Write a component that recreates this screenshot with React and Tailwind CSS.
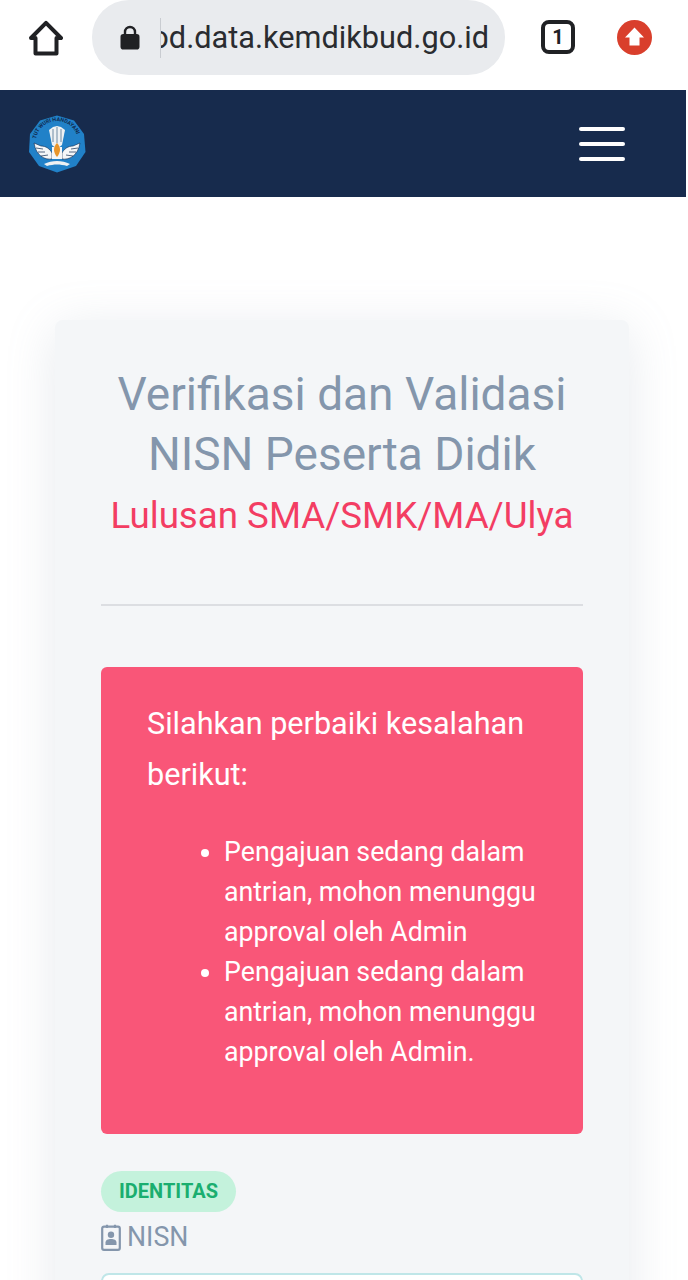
export default function App() {
  return (
    <div className="w-[688px] h-[1280px] overflow-hidden bg-white font-['Roboto',sans-serif]">
      {/* Browser bar */}
      <div className="h-[90px] flex items-start bg-white">
        <div className="w-[92px] h-[74px] flex items-center pl-[28px] pt-[1px]">
          <svg width="36" height="36" viewBox="0 0 36 36" fill="none" stroke="#202124" strokeWidth="4" strokeLinejoin="round" strokeLinecap="round">
            <path d="M3 18 L18 2.8 L33 18 H28.5 V33.5 H7.5 V18 Z" />
          </svg>
        </div>
        <div className="w-[413px] h-[75px] rounded-[37px] bg-[#e9ebee] flex items-center pl-[28px] pr-[16px]">
          <svg width="20" height="25" viewBox="0 0 20 25" className="shrink-0">
            <path d="M5 10 V7 a5 5 0 0 1 10 0 V10" fill="none" stroke="#202124" strokeWidth="2.4" />
            <rect x="0.5" y="9" width="19" height="15.5" rx="2.8" fill="#202124" />
          </svg>
          <div className="ml-[20px] w-[329px] overflow-hidden flex justify-end text-[30.7px] leading-[40px] text-[#2a2c30] whitespace-nowrap border-l border-[#c9ccd1]">
            pod.data.kemdikbud.go.id
          </div>
        </div>
        <div className="w-[183px] h-[74px] flex items-center pl-[36px]">
          <div className="w-[34px] h-[34px] border-[4px] border-[#202124] rounded-[8px] flex items-center justify-center text-[20px] font-bold text-[#202124] leading-none">
            1
          </div>
          <svg width="35" height="35" viewBox="0 0 35 35" className="ml-[42px]">
            <circle cx="17.5" cy="17.5" r="17.5" fill="#d93f2c" />
            <path d="M17.5 7.5 L27 17.5 H22.5 V25.5 H12.5 V17.5 H8 Z" fill="#fff" />
          </svg>
        </div>
      </div>

      {/* Navbar */}
      <div className="w-[686px] h-[107px] bg-[#172b4d] flex items-center justify-between pl-[28px] pr-[61px]">
        <svg width="58" height="58" viewBox="0 0 58 58">
          <path d="M29 0.5 L46 5.5 L56 19 L57.5 37 L48 51 L29 57.5 L11 51 L1 37 L2 19 L12 5.5 Z" fill="#2181c8" />
          <defs>
            <path id="logoArc" d="M7.5 28 C8 15 17 6.5 29 6 C41 6.5 50 15 50.5 28" />
          </defs>
          <text fontSize="5.4" fontWeight="700" fill="#10294d" fontFamily="Roboto, sans-serif">
            <textPath href="#logoArc" startOffset="4" textLength="55" lengthAdjust="spacingAndGlyphs">TUT WURI HANDAYANI</textPath>
          </text>
          <path d="M6 28 L13 31 C18 31 22 34 24 38 L24 44 C17 45 8 41 6 28 Z" fill="#f4f6f8" stroke="#10294d" strokeWidth="0.6" />
          <path d="M52 28 L45 31 C40 31 36 34 34 38 L34 44 C41 45 50 41 52 28 Z" fill="#f4f6f8" stroke="#10294d" strokeWidth="0.6" />
          <path d="M8 33 L15 34 M10 37 L17 37 M13 41 L20 40 M50 33 L43 34 M48 37 L41 37 M45 41 L38 40" stroke="#10294d" strokeWidth="0.7" />
          <path d="M21 15 L25 12 L29 11 L33 12 L37 15 L34 30 L29 34 L24 30 Z" fill="#eef1f3" />
          <path d="M25 14 V27 M29 12 V28 M33 14 V27" stroke="#6f8aa3" strokeWidth="1" />
          <path d="M24 32 H34 V44 H24 Z" fill="#f4f6f8" />
          <path d="M29 28 C33 32 33 37 29 42 C25 37 25 32 29 28 Z" fill="#e8952b" />
          <path d="M16 49 C24 45 34 45 42 49 L39 51 C32 49 26 49 19 51 Z" fill="#eef1f3" />
        </svg>
        <div className="flex flex-col gap-[11px]">
          <div className="w-[46px] h-[4px] rounded-full bg-white" />
          <div className="w-[46px] h-[4px] rounded-full bg-white" />
          <div className="w-[46px] h-[4px] rounded-full bg-white" />
        </div>
      </div>

      {/* Card */}
      <div className="ml-[55px] mt-[123px] w-[574px] h-[1100px] bg-[#f4f6f8] rounded-[8px] shadow-[0_8px_50px_rgba(136,152,170,0.2)] px-[46px] pt-[44px]">
        <h1 className="text-center text-[46px] leading-[60px] font-normal text-[#8496ac] whitespace-nowrap">
          Verifikasi dan Validasi
          <br />
          NISN Peserta Didik
        </h1>
        <p className="text-center text-[36.7px] leading-[46px] text-[#f33d63] mt-[9px] whitespace-nowrap">
          Lulusan SMA/SMK/MA/Ulya
        </p>
        <div className="h-[2px] bg-[#dcdee2] mt-[65px]" />

        <div className="mt-[61px] h-[467px] rounded-[6px] bg-[#f95678] text-white pl-[46px] pr-[30px] pt-[31px]">
          <p className="text-[30.6px] leading-[51px] whitespace-nowrap">Silahkan perbaiki kesalahan</p>
          <p className="text-[30.6px] leading-[51px]">berikut:</p>
          <ul className="list-disc mt-[32px] pl-[77px] text-[26.75px] leading-[40px] -mr-[10px]">
            <li>Pengajuan sedang dalam antrian, mohon menunggu approval oleh Admin</li>
            <li>Pengajuan sedang dalam antrian, mohon menunggu approval oleh Admin.</li>
          </ul>
        </div>

        <div className="mt-[37px] inline-flex items-center justify-center w-[135px] h-[41px] pb-[1px] rounded-full bg-[#c4f2dc] text-[#1aae6f] text-[20px] font-bold">
          IDENTITAS
        </div>
        <div className="flex items-center gap-[6px] mt-[3px] h-[44px] text-[26.8px] text-[#8496ac]">
          <svg width="20" height="27" viewBox="0 0 20 27" className="shrink-0">
            <rect x="1.2" y="2.6" width="17.6" height="23.2" rx="1.8" fill="none" stroke="#8496ac" strokeWidth="2.2" />
            <path d="M6 0.8 V4 M14 0.8 V4" stroke="#8496ac" strokeWidth="2.2" />
            <circle cx="10" cy="10.8" r="3.2" fill="#8496ac" />
            <path d="M4.5 21 V18.5 C4.5 16 7 15 10 15 C13 15 15.5 16 15.5 18.5 V21 Z" fill="#8496ac" />
          </svg>
          NISN
        </div>
        <div className="mt-[14px] h-[60px] rounded-[8px] border-2 border-[#bfe6e8] bg-white" />
      </div>
    </div>
  );
}
